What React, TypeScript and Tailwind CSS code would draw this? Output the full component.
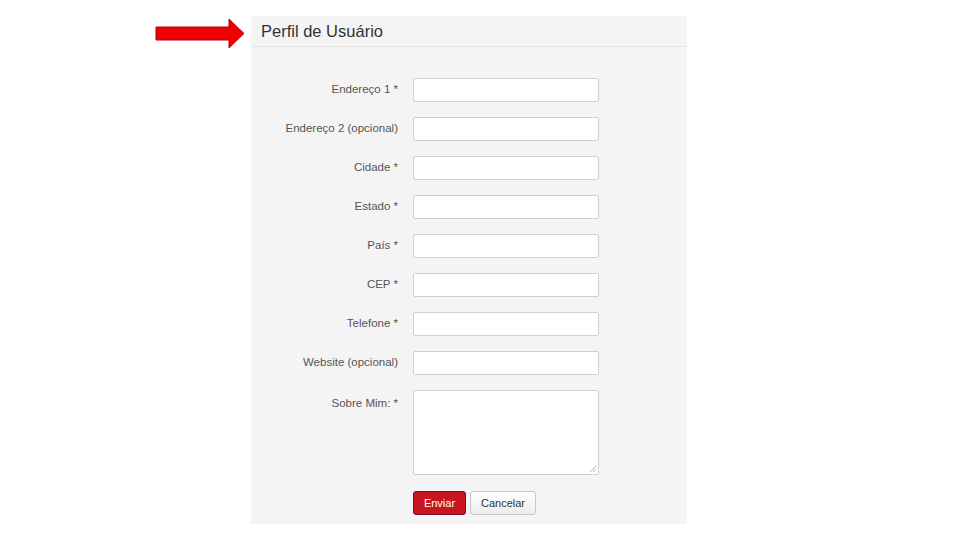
import React from "react";

const fields = [
  "Endereço 1 *",
  "Endereço 2 (opcional)",
  "Cidade *",
  "Estado *",
  "País *",
  "CEP *",
  "Telefone *",
  "Website (opcional)",
];

export default function App() {
  return (
    <div
      className="w-[960px] h-[540px] bg-white flex items-start pl-[155px] pt-[16px]"
      style={{ fontFamily: '"Liberation Sans", Arial, sans-serif' }}
    >
      <svg width="90" height="30" viewBox="0 0 90 30" className="mt-[3px] shrink-0">
        <polygon
          points="1,8 74,8 74,0 89,14.5 74,29 74,21 1,21"
          fill="#f00000"
          stroke="#b00010"
          strokeWidth="1"
        />
      </svg>
      <div className="ml-[6px] w-[436px] bg-[#f4f4f4] pb-[9px]">
        <div className="h-[31px] border-b border-[#e4e4e4] pl-[10px] flex items-center">
          <span className="text-[16.5px] text-[#333] leading-none pt-[1px]">Perfil de Usuário</span>
        </div>
        <div className="pt-[31px] flex flex-col gap-[15px]">
          {fields.map((f) => (
            <div key={f} className="flex items-center">
              <div className="w-[162px] pr-[15px] text-right text-[11.5px] text-[#555]">{f}</div>
              <div className="w-[186px] h-[24px] bg-white border border-[#cfcfcf] rounded-[2px]" />
            </div>
          ))}
          <div className="flex items-start">
            <div className="w-[162px] pr-[15px] text-right text-[11.5px] text-[#555] pt-[5px]">Sobre Mim: *</div>
            <div className="relative w-[186px] h-[85px] bg-white border border-[#cfcfcf] rounded-[2px]">
              <svg width="8" height="8" viewBox="0 0 8 8" className="absolute right-[1px] bottom-[1px]">
                <line x1="1" y1="7" x2="7" y2="1" stroke="#999" strokeWidth="0.8" />
                <line x1="4" y1="7" x2="7" y2="4" stroke="#999" strokeWidth="0.8" />
              </svg>
            </div>
          </div>
          <div className="flex items-center pl-[162px] gap-[4px] pt-[1px]">
            <button className="h-[24px] w-[53px] bg-[#c8161e] border border-[#7a0c2a] rounded-[3px] text-white text-[11px]">
              Enviar
            </button>
            <button className="h-[24px] w-[66px] bg-gradient-to-b from-white to-[#ececec] border border-[#c8c8c8] rounded-[3px] text-[#333] text-[11px]">
              Cancelar
            </button>
          </div>
        </div>
      </div>
    </div>
  );
}
